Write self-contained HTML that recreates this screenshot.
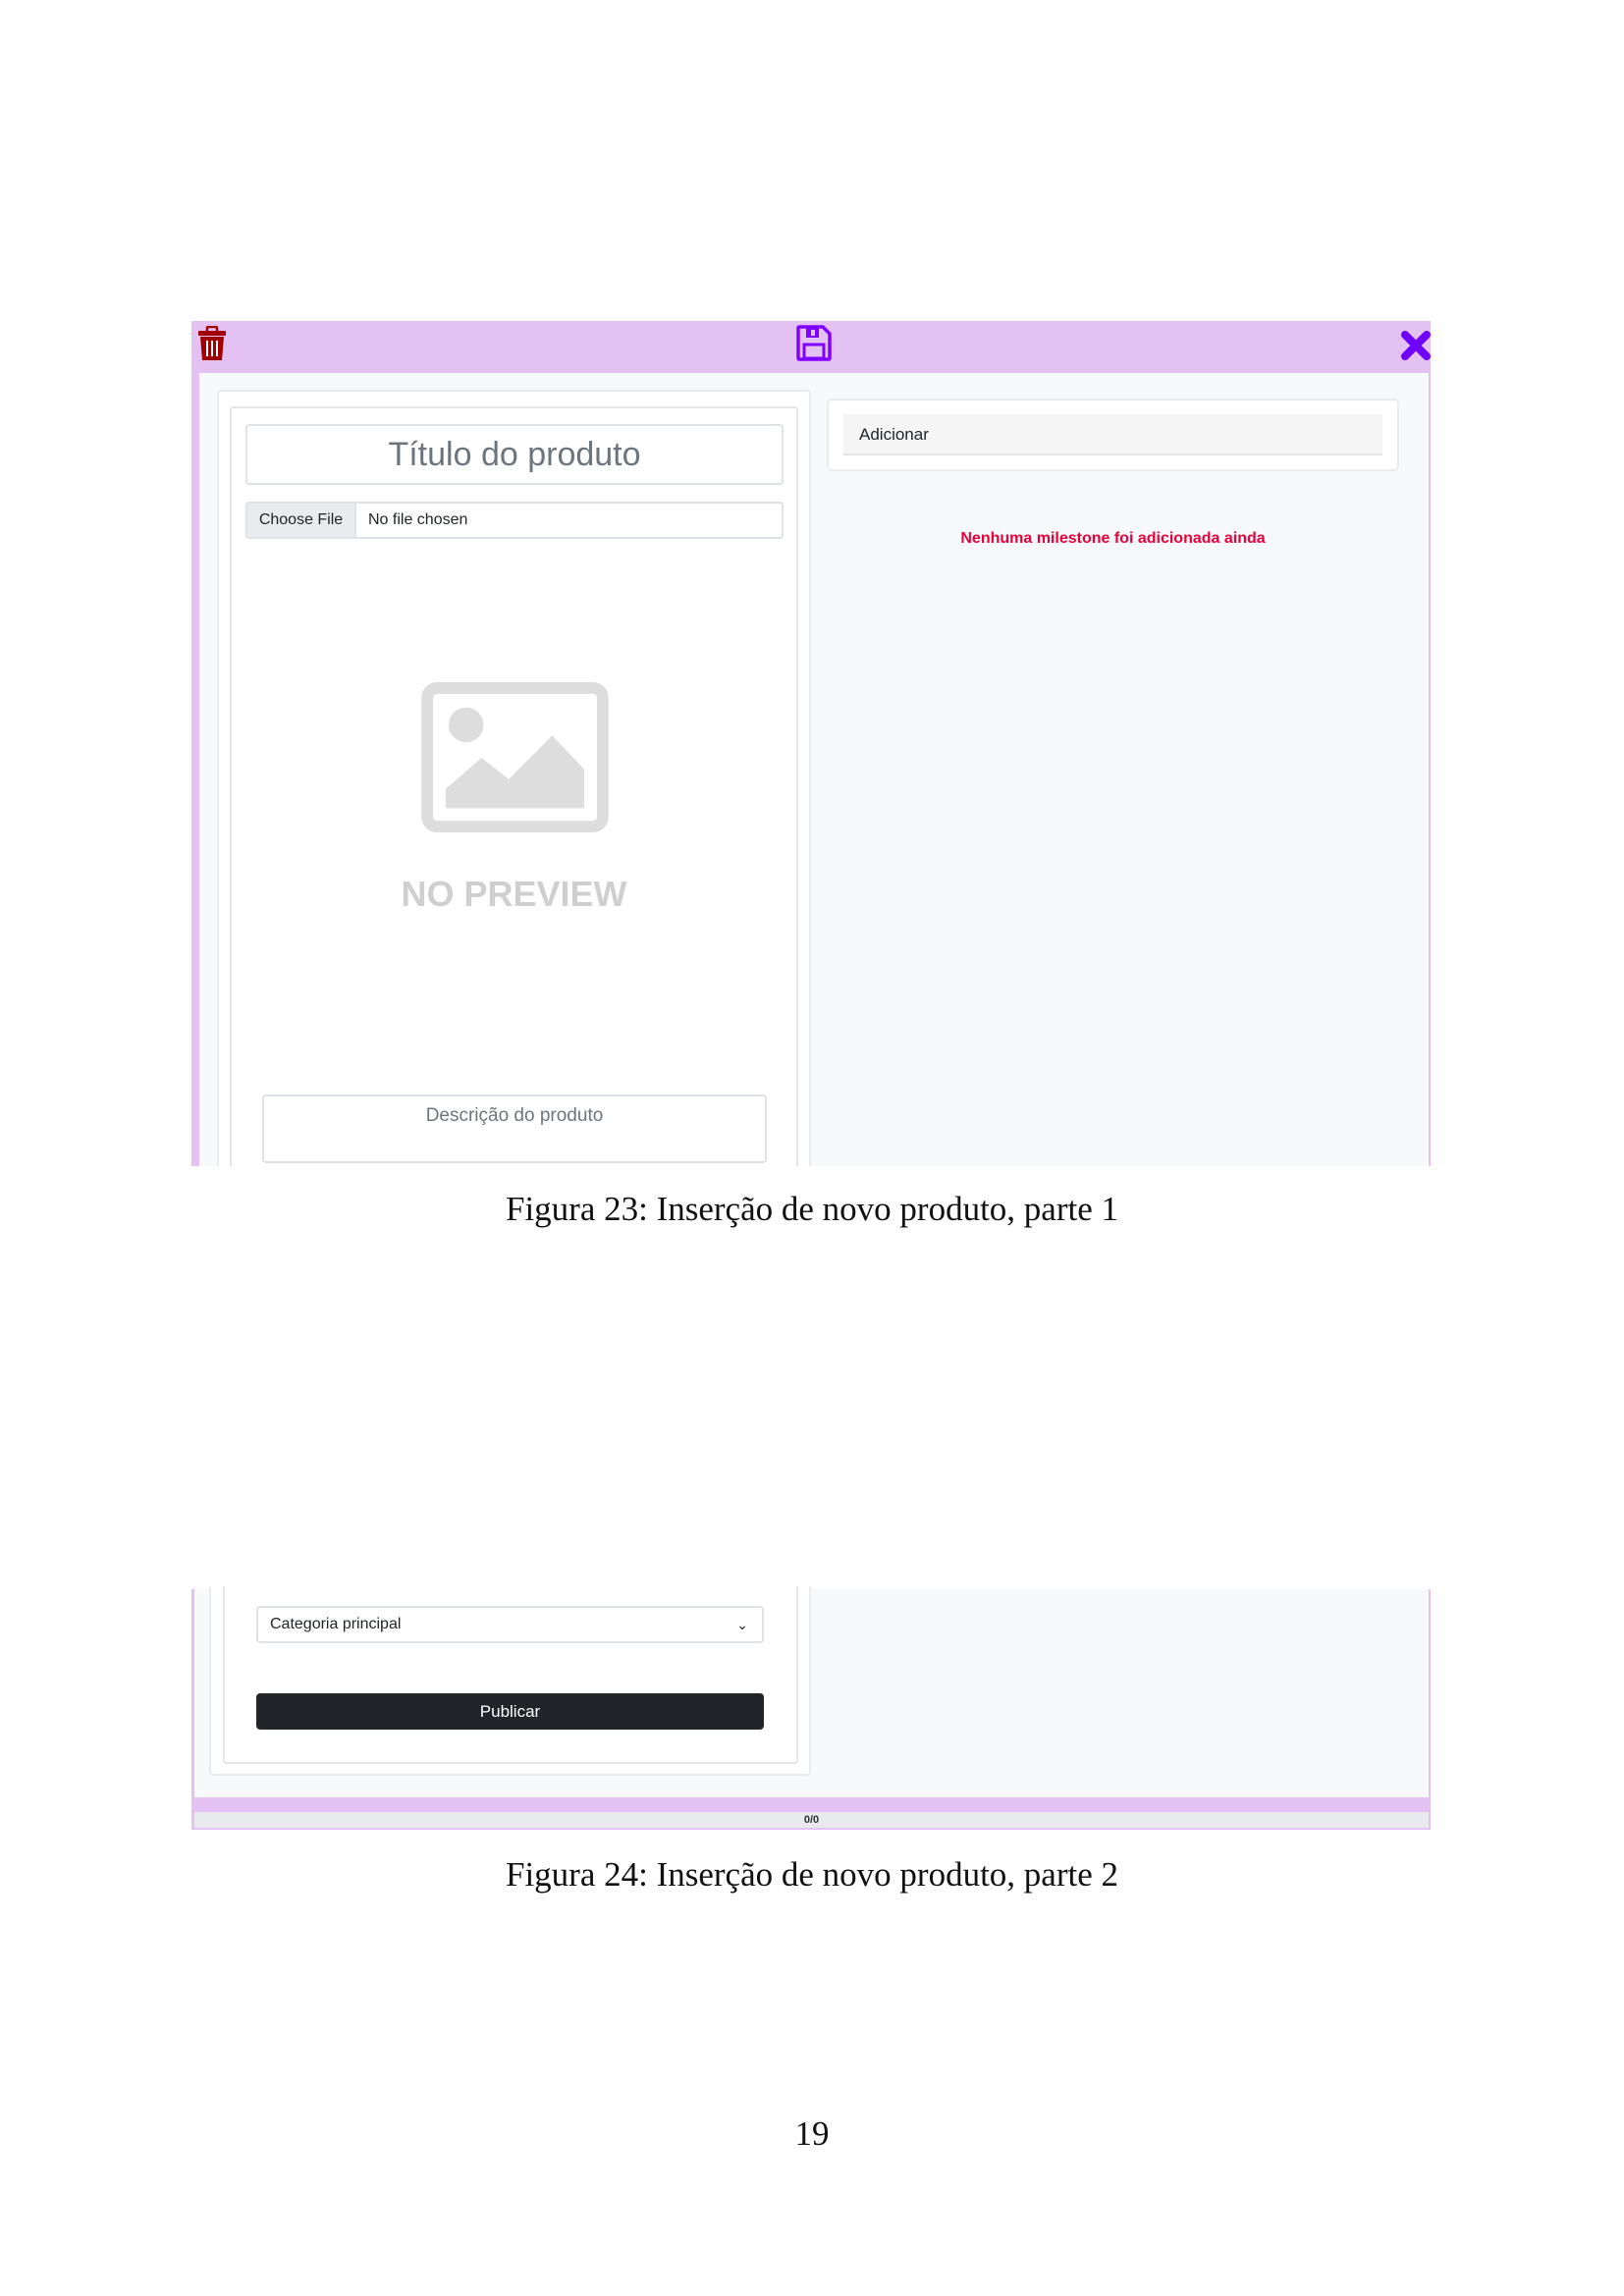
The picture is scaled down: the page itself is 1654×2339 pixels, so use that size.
<!DOCTYPE html>
<html><head><meta charset="utf-8"><style>
*{box-sizing:border-box;margin:0;padding:0}
body{width:1654px;height:2339px;background:#fff;position:relative;font-family:"Liberation Sans",sans-serif;overflow:hidden}
.a{position:absolute}
.cap{position:absolute;left:0;width:1654px;text-align:center;font-family:"Liberation Serif",serif;font-size:35px;line-height:40px;color:#111}
</style></head><body>

<!-- Figure 1 -->
<div class="a" style="left:195px;top:327px;width:1262px;height:861px;background:#f8f9fa;border-left:8px solid #e4c1f3;border-right:2px solid #e4c1f3"></div>
<div class="a" style="left:195px;top:327px;width:1262px;height:53px;background:#e4c1f3"></div>
<svg class="a" style="left:201px;top:332px" width="30" height="36" viewBox="0 0 30 36"><rect x="1" y="5" width="28" height="5" rx="1" fill="#a00000"/><rect x="10" y="1" width="10" height="6" rx="1" fill="none" stroke="#a00000" stroke-width="2.5"/><path d="M3 11h24l-2 24H5z" fill="#a00000"/><path d="M10 15v16M15 15v16M20 15v16" stroke="#fff" stroke-width="2"/></svg>
<svg class="a" style="left:811px;top:331px" width="36" height="37" viewBox="0 0 36 37"><path d="M3 2h24l7 7v25a1 1 0 0 1-1 1H3a1 1 0 0 1-1-1V3a1 1 0 0 1 1-1z" fill="none" stroke="#8000ff" stroke-width="3.5"/><rect x="10" y="3" width="13" height="10" fill="#8000ff"/><rect x="15" y="5" width="4" height="6" fill="#e4c1f3"/><rect x="8" y="20" width="20" height="14" fill="none" stroke="#8000ff" stroke-width="3"/></svg>
<svg class="a" style="left:1427px;top:337px" width="30" height="30" viewBox="0 0 30 30"><path d="M4 4L26 26M26 4L4 26" stroke="#7000ff" stroke-width="8" stroke-linecap="round"/></svg>

<div class="a" style="left:221px;top:397px;width:605px;height:791px;background:#fff;border:2px solid #e9ecef;border-bottom:none;border-radius:4px 4px 0 0"></div>
<div class="a" style="left:234px;top:414px;width:579px;height:774px;background:#fff;border:2px solid #e5e5e5;border-bottom:none;border-radius:4px 4px 0 0"></div>
<div class="a" style="left:250px;top:432px;width:548px;height:62px;border:2px solid #dee2e6;border-radius:4px;text-align:center;line-height:58px;font-size:34px;color:#6c757d">Título do produto</div>
<div class="a" style="left:250px;top:511px;width:548px;height:38px;border:2px solid #dee2e6;border-radius:4px;overflow:hidden;font-size:16px;line-height:34px;color:#212529;white-space:nowrap"><span style="display:inline-block;width:111px;background:#e9ecef;border-right:2px solid #dee2e6;text-align:center">Choose File</span><span style="padding-left:12px">No file chosen</span></div>
<svg class="a" style="left:429px;top:695px" width="191" height="153" viewBox="0 0 193 155"><rect x="6" y="6" width="181" height="143" rx="10" fill="none" stroke="#ddd" stroke-width="12"/><circle cx="46" cy="44" r="18" fill="#ddd"/><path d="M25 130L25 110L62 78L90 100L135 55L168 90V130Z" fill="#ddd"/></svg>
<div class="a" style="left:234px;top:890px;width:579px;text-align:center;font-size:36px;font-weight:bold;color:#cfcfcf">NO PREVIEW</div>
<div class="a" style="left:267px;top:1115px;width:514px;height:70px;border:2px solid #dee2e6;border-radius:4px;text-align:center;padding-top:9px;font-size:19px;color:#6c757d">Descrição do produto</div>

<div class="a" style="left:842px;top:406px;width:583px;height:74px;background:#fff;border:2px solid #ececec;border-radius:5px"></div>
<div class="a" style="left:859px;top:422px;width:549px;height:42px;background:#f5f5f5;border-bottom:2px solid #e3e3e3;font-size:17px;line-height:42px;padding-left:16px;color:#212529">Adicionar</div>
<div class="a" style="left:842px;top:540px;width:583px;text-align:center;font-size:16px;font-weight:bold;color:#e8003a">Nenhuma milestone foi adicionada ainda</div>

<div class="cap" style="top:1212px">Figura 23: Inserção de novo produto, parte 1</div>

<!-- Figure 2 -->
<div class="a" style="left:195px;top:1619px;width:1262px;height:245px;background:#f8f9fa;border-left:3px solid #e4c1f3;border-right:2px solid #e4c1f3;border-bottom:3px solid #e4c1f3"></div>
<div class="a" style="left:213px;top:1616px;width:613px;height:193px;background:#fff;border:2px solid #e9ecef;border-top:none;border-radius:0 0 4px 4px"></div>
<div class="a" style="left:227px;top:1616px;width:586px;height:181px;background:#fff;border:2px solid #e5e5e5;border-top:none;border-radius:0 0 4px 4px"></div>
<div class="a" style="left:261px;top:1636px;width:517px;height:38px;border:2px solid #dee2e6;border-radius:4px;font-size:16px;line-height:34px;padding-left:12px;color:#212529">Categoria principal<span style="position:absolute;right:14px;top:0;font-size:14px">&#8964;</span></div>
<div class="a" style="left:261px;top:1725px;width:517px;height:37px;background:#212529;border-radius:4px;color:#fff;text-align:center;line-height:37px;font-size:17px">Publicar</div>
<div class="a" style="left:195px;top:1831px;width:1262px;height:15px;background:#e4c1f3"></div>
<div class="a" style="left:198px;top:1846px;width:1257px;height:16px;background:#e9eaee;text-align:center;font-size:11px;font-weight:bold;line-height:16px;color:#333">0/0</div>

<div class="cap" style="top:1890px">Figura 24: Inserção de novo produto, parte 2</div>
<div class="cap" style="top:2154px">19</div>
</body></html>
